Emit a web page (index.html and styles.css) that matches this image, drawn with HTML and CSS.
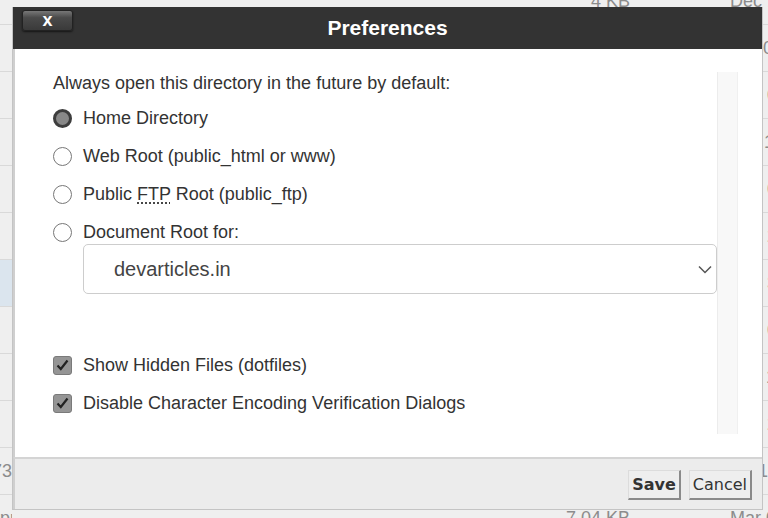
FILE: index.html
```html
<!DOCTYPE html>
<html lang="en">
<head>
    <meta charset="UTF-8">
    <meta name="viewport" content="width=device-width, initial-scale=1.0">
    <title>Preferences</title>
    <link rel="stylesheet" href="styles.css">
</head>
<body>

    <!-- file manager list behind the modal -->
    <div class="file-list">
        <div class="file-row"><span class="name"></span><span></span><span class="size">4 KB</span><span></span><span class="date">Dec 12, 2023</span></div>
        <div class="file-row"><span class="name"></span><span></span><span class="size">4 KB</span><span></span><span class="date">Oct 02, 2023</span></div>
        <div class="file-row"><span class="name"></span><span></span><span class="size">4 KB</span><span></span><span class="date">Dec 01, 2023</span></div>
        <div class="file-row"><span class="name"></span><span></span><span class="size">4 KB</span><span></span><span class="date">Jan 14, 2024</span></div>
        <div class="file-row"><span class="name"></span><span></span><span class="size">4 KB</span><span></span><span class="date">Dec 09, 2023</span></div>
        <div class="file-row"><span class="name"></span><span></span><span class="size">4 KB</span><span></span><span class="date">Dec 20, 2023</span></div>
        <div class="file-row selected"><span class="name"></span><span></span><span class="size">4 KB</span><span></span><span class="date">Nov 30, 2023</span></div>
        <div class="file-row"><span class="name"></span><span></span><span class="size">4 KB</span><span></span><span class="date">Nov 04, 2023</span></div>
        <div class="file-row"><span class="name"></span><span></span><span class="size">312 bytes</span><span></span><span class="date">Feb 11, 2023</span></div>
        <div class="file-row"><span class="name"></span><span></span><span class="size">1 KB</span><span></span><span class="date">Aug 23, 2023</span></div>
        <div class="file-row"><span class="name">error_log.73</span><span></span><span class="size">2 KB</span><span></span><span class="date">Jul 19, 2023</span></div>
        <div class="file-row"><span class="name name-left">pp</span><span></span><span class="size">7.04 KB</span><span></span><span class="date">Mar 08, 2023</span></div>
    </div>

    <div class="dialog">
        <div class="dialog-header">
            <button class="close-btn">x</button>
            <h1>Preferences</h1>
            <span></span>
        </div>

        <div class="dialog-body">
            <div class="scroll-box">
                <div class="prefs">
                    <p class="prefs-title">Always open this directory in the future by default:</p>

                    <label class="option">
                        <span class="radio checked"></span>
                        Home Directory
                    </label>
                    <label class="option">
                        <span class="radio"></span>
                        Web Root (public_html or www)
                    </label>
                    <label class="option">
                        <span class="radio"></span>
                        <span>Public <abbr title="File Transfer Protocol">FTP</abbr> Root (public_ftp)</span>
                    </label>
                    <label class="option">
                        <span class="radio"></span>
                        Document Root for:
                    </label>

                    <div class="select-box">
                        <span>devarticles.in</span>
                        <svg width="14" height="9" viewBox="0 0 14 9"><path d="M1 1.5 L7 7.5 L13 1.5" fill="none" stroke="#555" stroke-width="1.5"/></svg>
                    </div>

                    <label class="option check-first">
                        <span class="checkbox">
                            <svg width="13" height="12" viewBox="0 0 13 12"><path d="M1.5 6.5 L4.8 10 L11.5 1.5" fill="none" stroke="#222" stroke-width="2.2"/></svg>
                        </span>
                        Show Hidden Files (dotfiles)
                    </label>
                    <label class="option">
                        <span class="checkbox">
                            <svg width="13" height="12" viewBox="0 0 13 12"><path d="M1.5 6.5 L4.8 10 L11.5 1.5" fill="none" stroke="#222" stroke-width="2.2"/></svg>
                        </span>
                        Disable Character Encoding Verification Dialogs
                    </label>
                </div>
                <div class="scroll-track"></div>
            </div>
        </div>

        <div class="dialog-footer">
            <button class="btn btn-save">Save</button>
            <button class="btn">Cancel</button>
        </div>
    </div>

</body>
</html>
```

FILE: styles.css
```css
* {
    box-sizing: border-box;
}

body {
    margin: 0;
    height: 518px;
    overflow: hidden;
    background-color: #efefef;
    font-family: 'Liberation Sans', Arial, sans-serif;
    color: #333;
}

/* background list */

.file-list {
    margin-top: -22px;
}

.file-row {
    display: grid;
    grid-template-columns: 12px 498px 120px 100px 1fr;
    align-items: center;
    height: 47px;
    border-bottom: 1px solid #d9d9d9;
    font-size: 18px;
    color: #8c8c8c;
    white-space: nowrap;
}

.file-row.selected .name {
    background-color: #dbe5ee;
}

.file-row .name {
    height: 100%;
    display: flex;
    align-items: center;
    justify-content: flex-end;
    overflow: hidden;
}

.file-row .name-left {
    justify-content: flex-start;
}

.file-row .size {
    text-align: right;
}

.file-row .date {
    overflow: hidden;
}

/* modal */

.dialog {
    position: absolute;
    left: 12px;
    top: 7px;
    width: 751px;
    height: 503px;
    display: flex;
    flex-direction: column;
    background-color: white;
    border: 1px solid #c4c4c4;
    border-top: none;
}

.dialog-header {
    display: grid;
    grid-template-columns: 1fr auto 1fr;
    align-items: center;
    height: 42px;
    background-color: #333;
    padding: 0 9px;
}

.dialog-header h1 {
    margin: 0;
    font-size: 21px;
    font-weight: bold;
    color: white;
}

.close-btn {
    justify-self: start;
    width: 51px;
    height: 21px;
    margin-top: -16px;
    padding: 0;
    border: 1px solid #222;
    border-radius: 3px;
    background: linear-gradient(#777 0%, #4a4a4a 35%, #3a3a3a 100%);
    box-shadow: 0 1px 2px rgba(0, 0, 0, 0.6);
    color: white;
    font-family: 'Liberation Sans', Arial, sans-serif;
    font-size: 18px;
    font-weight: bold;
    line-height: 17px;
}

.dialog-body {
    flex: 1;
    padding: 23px 24px 23px 38px;
    border-left: 2px solid #cfcfcf;
}

.scroll-box {
    display: flex;
    height: 100%;
}

.prefs {
    flex: 1;
    font-size: 18px;
}

.prefs-title {
    margin: 0 0 13px;
    line-height: 22px;
}

.option {
    display: flex;
    align-items: center;
    gap: 11px;
    line-height: 22px;
    margin-bottom: 16px;
}

.option abbr {
    text-decoration: underline dotted;
    text-underline-offset: 3px;
}

.radio {
    width: 19px;
    height: 19px;
    border-radius: 50%;
    border: 1px solid #777;
    background-color: white;
}

.radio.checked {
    border: 3px solid #3d3d3d;
    background-color: #888;
}

.checkbox {
    width: 19px;
    height: 19px;
    border-radius: 3px;
    border: 1px solid #7a7a7a;
    background-color: #959595;
    display: flex;
    align-items: center;
    justify-content: center;
}

.select-box {
    display: flex;
    align-items: center;
    justify-content: space-between;
    margin: -15px 0 0 30px;
    height: 50px;
    padding: 0 4px 0 30px;
    border: 1px solid #cdcdcd;
    border-radius: 5px;
    font-size: 20px;
    color: #444;
}

.check-first {
    margin-top: 60px;
}

.scroll-track {
    width: 21px;
    background-color: #f8f8f8;
    border-left: 1px solid #ececec;
    border-right: 1px solid #f0f0f0;
}

.dialog-footer {
    display: flex;
    justify-content: flex-end;
    align-items: center;
    gap: 8px;
    height: 52px;
    padding: 2px 10px 0 0;
    background-color: #ececec;
    border-top: 2px solid #d4d4d4;
    border-left: 2px solid #cfcfcf;
}

.btn {
    height: 30px;
    padding: 0 3px;
    background-color: #eeeeee;
    border-top: 1px solid #dcdcdc;
    border-left: 1px solid #dcdcdc;
    border-right: 2px solid #8a8a8a;
    border-bottom: 2px solid #8a8a8a;
    font-family: 'DejaVu Sans', Verdana, sans-serif;
    font-size: 16px;
    color: #333;
}

.btn-save {
    font-weight: bold;
}
```
